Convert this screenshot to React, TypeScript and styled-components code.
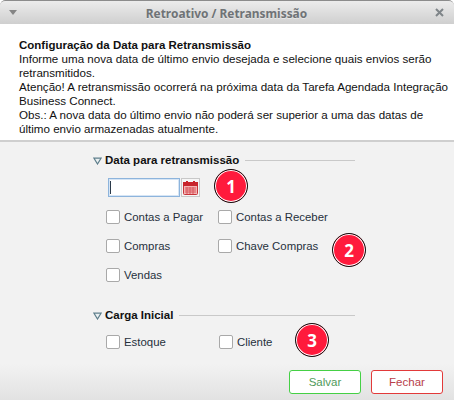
import React from "react";
import styled, { createGlobalStyle } from "styled-components";

const GlobalStyle = createGlobalStyle`
  html, body {
    margin: 0;
    padding: 0;
    background: #fff;
  }
`;

const Dialog = styled.div`
  position: relative;
  width: 454px;
  height: 400px;
  display: flex;
  flex-direction: column;
  overflow: hidden;
  box-sizing: border-box;
  border-radius: 5px 5px 0 0;
  font-family: "Liberation Sans", Arial, sans-serif;
  font-size: 11.6px;
  color: #1c2530;
`;

const TitleBar = styled.div`
  height: 24px;
  flex: none;
  box-sizing: border-box;
  border-top: 1px solid #8c8c8c;
  border-radius: 5px 5px 0 0;
  background: linear-gradient(#ececec, #cfcfcf);
  display: flex;
  align-items: center;
  justify-content: space-between;
  padding: 0 10px 0 9px;
`;

const Title = styled.span`
  font-family: "Noto Sans", sans-serif;
  font-size: 11.9px;
  font-weight: 700;
  color: #6f7376;
  text-shadow: 0 1px 0 #e6e6e6;
`;

const Header = styled.div`
  height: 118px;
  flex: none;
  box-sizing: border-box;
  background: #fff;
  border-bottom: 2px solid #cfcfcf;
  padding: 14px 0 0 19px;
  line-height: 14px;
  color: #111;
  white-space: nowrap;
`;

const HeaderTitle = styled.div`
  font-weight: 700;
  font-size: 11.5px;
`;

const Body = styled.div`
  flex: 1;
  display: flex;
  flex-direction: column;
  background: linear-gradient(#f2f2f2 0, #f2f2f2 222px, #e2e2e2 100%);
  padding: 10px 0 0 91px;
  box-sizing: border-box;
`;

const Legend = styled.div<{ $top?: number }>`
  display: flex;
  align-items: center;
  height: 16px;
  width: 264px;
  margin-top: ${(p) => p.$top ?? 0}px;
  color: #111;
  font-weight: 700;
  font-size: 11.5px;

  &::after {
    content: "";
    flex: 1;
    height: 1px;
    margin-left: 6px;
    background: #c9c9c9;
  }
`;

const Arrow = styled.svg`
  width: 9px;
  height: 8px;
  margin: 1px 3px 0 2px;
  flex: none;
`;

const DateRow = styled.div`
  display: flex;
  align-items: center;
  gap: 1px;
  margin: 10px 0 0 17px;
`;

const DateInput = styled.input`
  width: 72px;
  height: 19px;
  box-sizing: border-box;
  border: 1px solid #8db4dc;
  box-shadow: inset 0 0 0 1px #d6e5f5;
  background: linear-gradient(#2b3a4a, #2b3a4a) 1px 2px / 1px 13px no-repeat #fff;
  outline: none;
  padding: 0;
`;

const CalendarButton = styled.div`
  width: 19px;
  height: 19px;
  box-sizing: border-box;
  border: 1px solid #c8c8c8;
  background: #f6f6f6;
  display: flex;
  align-items: center;
  justify-content: center;
`;

const CheckGrid = styled.div<{ $top: number; $col: number }>`
  display: grid;
  grid-template-columns: ${(p) => p.$col}px auto;
  justify-content: start;
  row-gap: 15px;
  margin: ${(p) => p.$top}px 0 0 15px;
`;

const Check = styled.label`
  display: flex;
  align-items: center;
  height: 14px;
  font-size: 11.4px;
  color: #26303c;
`;

const Box = styled.span`
  width: 12px;
  height: 12px;
  flex: none;
  margin-right: 4px;
  border: 1px solid #a9a9a9;
  border-radius: 2px;
  background: #fff;
`;

const Footer = styled.div`
  position: absolute;
  right: 11px;
  bottom: 6px;
  display: flex;
  gap: 10px;
`;

const Button = styled.button<{ $color: string; $text: string }>`
  width: 72px;
  height: 24px;
  box-sizing: border-box;
  padding: 0;
  border: 1px solid ${(p) => p.$color};
  border-radius: 3px;
  background: #fff;
  color: ${(p) => p.$text};
  font-family: "Liberation Sans", Arial, sans-serif;
  font-size: 11.5px;
`;

const Badge = styled.div<{ $x: number; $y: number }>`
  position: absolute;
  left: ${(p) => p.$x - 17}px;
  top: ${(p) => p.$y - 17}px;
  width: 34px;
  height: 34px;
  box-sizing: border-box;
  border-radius: 50%;
  background: #ff1a3c;
  border: 1px solid #111;
  box-shadow: inset 0 0 0 1px #fff;
  display: flex;
  align-items: center;
  justify-content: center;
  color: #fff;
  font-family: "Open Sans", sans-serif;
  font-weight: 700;
  font-size: 17px;
`;

const SectionArrow = () => (
  <Arrow viewBox="0 0 9 8">
    <path d="M1 1.2h7L4.5 7z" fill="#eaf0f2" stroke="#5f7f8c" strokeWidth="1.2" />
  </Arrow>
);

const CalendarIcon = () => (
  <svg width="15" height="14" viewBox="0 0 15 14">
    <rect x="0.5" y="1.5" width="14" height="12" rx="1" fill="#f3b4b4" stroke="#c8343a" />
    <rect x="0" y="1" width="15" height="4" fill="#c8242c" />
    <rect x="3" y="0" width="2" height="3" fill="#c8242c" />
    <rect x="10" y="0" width="2" height="3" fill="#c8242c" />
    <path d="M2 7h11M2 9h11M2 11h11M4 6v7M7 6v7M10 6v7" stroke="#d9565c" strokeWidth="1" />
  </svg>
);

const CheckItem = ({ label }: { label: string }) => (
  <Check>
    <Box />
    {label}
  </Check>
);

export default function App() {
  return (
    <>
      <GlobalStyle />
      <Dialog>
        <TitleBar>
          <svg width="9" height="5" viewBox="0 0 9 5">
            <path d="M0 0h8L4 5z" fill="#858585" />
          </svg>
          <Title>Retroativo / Retransmissão</Title>
          <svg width="9" height="9" viewBox="0 0 9 9">
            <path d="M1 1l7 7M8 1l-7 7" stroke="#7f8589" strokeWidth="2" />
          </svg>
        </TitleBar>
        <Header>
          <HeaderTitle>Configuração da Data para Retransmissão</HeaderTitle>
          Informe uma nova data de último envio desejada e selecione quais envios serão
          <br />
          retransmitidos.
          <br />
          Atenção! A retransmissão ocorrerá na próxima data da Tarefa Agendada Integração
          <br />
          Business Connect.
          <br />
          Obs.: A nova data do último envio não poderá ser superior a uma das datas de
          <br />
          último envio armazenadas atualmente.
        </Header>
        <Body>
          <Legend>
            <SectionArrow />
            Data para retransmissão
          </Legend>
          <DateRow>
            <DateInput />
            <CalendarButton>
              <CalendarIcon />
            </CalendarButton>
          </DateRow>
          <CheckGrid $top={13} $col={112}>
            <CheckItem label="Contas a Pagar" />
            <CheckItem label="Contas a Receber" />
            <CheckItem label="Compras" />
            <CheckItem label="Chave Compras" />
            <CheckItem label="Vendas" />
          </CheckGrid>
          <Legend $top={25}>
            <SectionArrow />
            Carga Inicial
          </Legend>
          <CheckGrid $top={12} $col={113}>
            <CheckItem label="Estoque" />
            <CheckItem label="Cliente" />
          </CheckGrid>
        </Body>
        <Footer>
          <Button $color="#45d045" $text="#4f9a5a">Salvar</Button>
          <Button $color="#e23a3a" $text="#b8404a">Fechar</Button>
        </Footer>
        <Badge $x={231} $y={186}>1</Badge>
        <Badge $x={349} $y={250}>2</Badge>
        <Badge $x={312} $y={340}>3</Badge>
      </Dialog>
    </>
  );
}
